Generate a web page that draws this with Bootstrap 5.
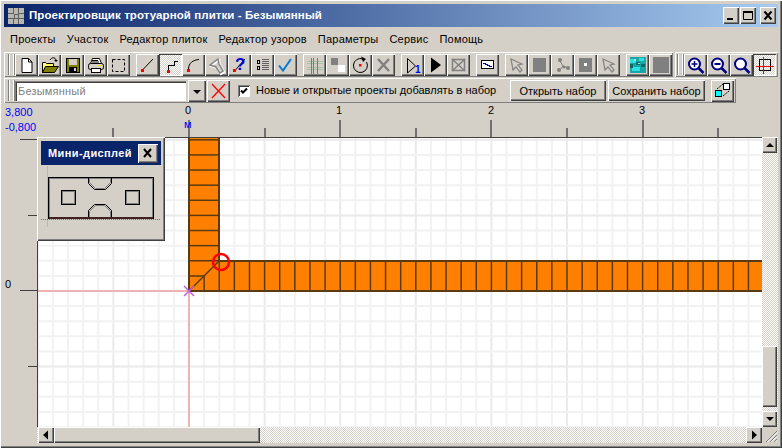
<!DOCTYPE html>
<html lang="ru">
<head>
  <meta charset="UTF-8">
  <title>Проектировщик тротуарной плитки</title>
  <link rel="stylesheet" href="https://cdn.jsdelivr.net/npm/bootstrap@5.3.0/dist/css/bootstrap.min.css">
  <style>
    html, body { width: 782px; height: 448px; overflow: hidden; }
    body { background: #d4d0c8; font: 11px/13px "Liberation Sans", Arial, sans-serif; color: #000; }
    .appWin { position: relative; width: 782px; height: 448px; padding: 4px 4px 4px; background: #d4d0c8;
      box-shadow: inset 1px 1px #fff, inset -1px -1px #404040, inset -2px -2px #808080; }
    .titleBar { height: 23px; padding-left: 4px; background: linear-gradient(90deg, #0a246a, #a6caf0); color: #fff; font-weight: 700; font-size: 11.5px; }
    .titleText { margin-left: 5px; letter-spacing: .08px; }
    .capBtn { width: 16px; height: 17px; margin-left: 1px; padding: 0; border: 0; background: #d4d0c8;
      box-shadow: inset 1px 1px #fff, inset -1px -1px #404040, inset -2px -2px #808080; }
    .capBtn svg { display: block; }
    .capGap { margin-left: 2px; margin-right: 2px; }
    .menuRow { height: 25px; padding-left: 6px; }
    .menuRow span { margin-right: 11px; font-size: 11px; letter-spacing: .22px; }
    .toolRow { height: 26px; }
    .toolBand { height: 25px; padding: 2px 0 0 4px; box-shadow: inset 1px 1px #fff, inset -1px -1px #808080; }
    .grip { width: 7px; height: 21px; border-left: 1px solid #808080; border-right: 1px solid #808080; box-shadow: inset 1px 0 #fff, inset -1px 0 #fff; background: linear-gradient(#d4d0c8, #d4d0c8) 2px 0/1px 100% no-repeat; flex: none; }
    .wbtn.btn { --bs-btn-border-width: 0; --bs-btn-padding-x: 0; --bs-btn-padding-y: 0; --bs-btn-border-radius: 0;
      display: block; flex: none; width: 23px; height: 22px; color: #000; background: #d4d0c8; font: 11px "Liberation Sans", Arial, sans-serif;
      box-shadow: inset 1px 1px #fff, inset -1px -1px #404040, inset -2px -2px #808080; }
    .wbtn.pressedBtn { background: repeating-conic-gradient(#fff 0 25%, #d4d0c8 0 50%) 0 0/2px 2px;
      box-shadow: inset 1px 1px #404040, inset -1px -1px #fff; }
    .wbtn svg { display: block; margin-top: -1px; }
    .gapL { margin-left: 6px; }
    .nameInput.form-control { width: 171px; height: 20px; padding: 0 3px; flex: none; border: 0; border-radius: 0; background: #fff; color: #808080; font-size: 11px; letter-spacing: .2px;
      box-shadow: inset 1px 1px #808080, inset 2px 2px #404040, inset -1px -1px #fff; }
    .keepChk.form-check-input { width: 12px; height: 12px; margin: 0 6px 0 8px; flex: none; border: 0; border-radius: 0; background-color: #fff;
      background-image: url("data:image/svg+xml,%3Csvg xmlns='http://www.w3.org/2000/svg' viewBox='0 0 12 12'%3E%3Cpath d='M3 5.5l2 2 4-4' fill='none' stroke='%23000' stroke-width='2'/%3E%3C/svg%3E"); background-size: 12px 12px;
      box-shadow: inset 1px 1px #808080, inset -1px -1px #fff, inset 2px 2px #404040; }
    .optText { letter-spacing: .02px; }
    .textBtn.btn { width: 96px; height: 21px; }
    .workArea { display: grid; grid-template-columns: 33px 725px 16px; grid-template-rows: 33px 290px 16px; }
    .topRuler { grid-column: 1 / 4; position: relative; }
    .topRuler svg, .sideRuler svg { display: block; }
    .sideRuler { grid-row: 2 / 4; }
    svg text { font-family: "Liberation Sans", Arial, sans-serif; font-size: 11px; }
    .canvasBox { box-shadow: inset 1px 1px #404040; background: #fff; overflow: hidden; padding: 1px 0 0 1px; }
    .dither { background: repeating-conic-gradient(#fff 0 25%, #d4d0c8 0 50%) 0 0/2px 2px; }
    .barBtn { width: 15px; height: 16px; flex: none; background: #d4d0c8; box-shadow: inset 1px 1px #fff, inset -1px -1px #404040, inset -2px -2px #808080; }
    .barBtn svg { display: block; }
    .thumbV { width: 15px; height: 61px; margin-top: auto; margin-bottom: 4px; background: #d4d0c8; box-shadow: inset 1px 1px #fff, inset -1px -1px #404040, inset -2px -2px #808080; }
    .thumbH { width: 206px; height: 16px; background: #d4d0c8; box-shadow: inset 1px 1px #fff, inset -1px -1px #404040, inset -2px -2px #808080; }
    .hBar { padding-left: 1px; }
    .miniPanel { position: absolute; left: 37px; top: 137px; width: 128px; height: 104px; padding: 4px; background: #d4d0c8;
      box-shadow: inset 1px 1px #fff, inset -1px -1px #404040, inset -2px -2px #808080; }
    .miniHead { height: 24px; background: #0a246a; color: #fff; font-weight: 700; font-size: 11px; padding-left: 7px; letter-spacing: .4px; }
    .miniClose { width: 20px; height: 19px; margin-right: 3px; border: 0; padding: 0; background: #d4d0c8; box-shadow: inset 1px 1px #fff, inset -1px -1px #404040, inset -2px -2px #808080; }
    .miniClose svg { display: block; }
    .miniPic { display: block; }
  </style>
</head>
<body>
  <div class="appWin">
    <div class="titleBar d-flex align-items-center">
      <svg width="16" height="16" viewBox="0 0 16 16" shape-rendering="crispEdges">
        <rect width="16" height="16" fill="#b8b8b0"/>
        <path d="M0 5h6M0 10h6M10 5h6M10 10h6M5 0v5M10 0v5M5 11v5M10 11v5M6 6h4v4H6z" stroke="#606060" fill="none"/>
      </svg>
      <span class="titleText">Проектировщик тротуарной плитки - Безымянный</span>
      <div class="ms-auto d-flex capGap">
        <button class="capBtn"><svg width="16" height="17"><rect x="4" y="11" width="6" height="2"/></svg></button>
        <button class="capBtn"><svg width="16" height="17"><path d="M3.500 4.500h9v8h-9z" fill="none" stroke="#000"/><rect x="3" y="4" width="10" height="2"/></svg></button>
        <button class="capBtn ms-1"><svg width="16" height="17"><path d="M4.500 4.500l7 8M11.500 4.500l-7 8" stroke="#000" stroke-width="2"/></svg></button>
      </div>
    </div>

    <div class="menuRow d-flex align-items-center">
      <span>Проекты</span><span>Участок</span><span>Редактор плиток</span><span>Редактор узоров</span><span>Параметры</span><span>Сервис</span><span>Помощь</span>
    </div>

    <div class="toolRow d-flex">
      <div class="toolBand d-flex" style="width:669px">
        <div class="grip"></div>
        <button class="btn wbtn"><svg width="23" height="22"><path d="M7 4.500h6.500l3.500 3.500v10.500H7z" fill="#fff" stroke="#000"/><path d="M13.500 4.500v3.500h3.500" fill="none" stroke="#000"/></svg></button>
        <button class="btn wbtn"><svg width="23" height="22"><path d="M4.500 18.500v-10h3l1 1h7v9z" fill="#ffff66" stroke="#000"/><path d="M4.500 18.500l3-6h13l-4 6z" fill="#808000" stroke="#000"/><path d="M12 6c2-3 5-3 6 0" fill="none" stroke="#000"/><path d="M16 6h4l-2 2z"/></svg></button>
        <button class="btn wbtn"><svg width="23" height="22" shape-rendering="crispEdges"><rect x="5" y="4" width="14" height="15" fill="#000"/><rect x="6" y="5" width="12" height="13" fill="#808000"/><rect x="8" y="5" width="8" height="6" fill="#d4d0c8"/><rect x="8" y="13" width="8" height="5" fill="#000"/><rect x="13" y="14" width="2" height="3" fill="#d4d0c8"/></svg></button>
        <button class="btn wbtn"><svg width="23" height="22"><path d="M8.500 4.500h7l2 5h-11z" fill="#fff" stroke="#000"/><rect x="4.500" y="9.500" width="15" height="6" rx="2" fill="#d4d0c8" stroke="#000"/><rect x="7.500" y="14.500" width="9" height="4" fill="#fff" stroke="#000"/><path d="M8 6.500h6M8 8h7" stroke="#000"/><rect x="14" y="11" width="3" height="1" fill="#ffd800"/></svg></button>
        <button class="btn wbtn"><svg width="23" height="22"><rect x="5.500" y="5.500" width="12" height="12" fill="none" stroke="#000" stroke-dasharray="3 2"/></svg></button>

        <button class="btn wbtn gapL"><svg width="23" height="22"><path d="M7 15.500L17 5" stroke="#000"/><rect x="5" y="15" width="3" height="3" fill="#f00"/></svg></button>
        <button class="btn wbtn pressedBtn"><svg width="23" height="22" shape-rendering="crispEdges"><path d="M9.500 17v-5.500h6v-4h3" fill="none" stroke="#000"/><rect x="8" y="16" width="3" height="3" fill="#f00"/></svg></button>
        <button class="btn wbtn"><svg width="23" height="22"><path d="M6.500 15C6.500 9 11 6 17 5.500" fill="none" stroke="#000"/><rect x="5" y="15" width="3" height="3" fill="#f00"/></svg></button>
        <button class="btn wbtn"><svg width="23" height="22"><path d="M5 11l8-6 1 5 4 7-3 2-4-6z" fill="none" stroke="#fff" stroke-width="2" transform="translate(1 1)"/><path d="M5 11l8-6 1 5 4 7-3 2-4-6z" fill="none" stroke="#808080" stroke-width="1.500"/></svg></button>
        <button class="btn wbtn"><svg width="23" height="22"><path d="M7 16.500L17 5" stroke="#000"/><rect x="5" y="15" width="3" height="3" fill="#f00"/><text x="7" y="16" fill="#0000d0" style="font-size:17px;font-weight:700">?</text></svg></button>
        <button class="btn wbtn"><svg width="23" height="22" shape-rendering="crispEdges"><path d="M11 5.500h7M11 7.500h7M11 9.500h7M11 11.500h7M11 13.500h7M11 15.500h7" stroke="#606060"/><circle cx="7.500" cy="8" r="1.500" fill="none" stroke="#000"/><circle cx="7.500" cy="14" r="1.500" fill="none" stroke="#000"/></svg></button>
        <button class="btn wbtn"><svg width="23" height="22"><path d="M5 11.500l4 5L17 5" fill="none" stroke="#0a7ad0" stroke-width="2"/></svg></button>

        <button class="btn wbtn gapL"><svg width="23" height="22" shape-rendering="crispEdges"><path d="M4 7.500h16M4 9.500h16M4 13.500h16M4 15.500h16" stroke="#a8c0a8"/><path d="M8.500 4v16M10.500 4v16M14.500 4v16" stroke="#70806f"/></svg></button>
        <button class="btn wbtn"><svg width="23" height="22" shape-rendering="crispEdges"><rect x="5" y="4" width="14" height="14" fill="#808080"/><rect x="12" y="4" width="7" height="7" fill="#d4d0c8"/><rect x="5" y="11" width="7" height="7" fill="#d4d0c8"/><rect x="12" y="11" width="7" height="7" fill="#fff"/></svg></button>
        <button class="btn wbtn"><svg width="23" height="22"><path d="M17.500 8a7 7 0 1 1-3.500-3" fill="none" stroke="#000"/><path d="M12 2.500l5 2.500-3 3z"/><rect x="10" y="10" width="2.500" height="2.500" fill="#f00"/></svg></button>
        <button class="btn wbtn"><svg width="23" height="22"><path d="M6 5l11 12M17 5L6 17" stroke="#808080" stroke-width="2.500"/></svg></button>

        <button class="btn wbtn gapL"><svg width="23" height="22"><path d="M6.500 4.500l8 7.500-8 7z" fill="none" stroke="#000"/><text x="14" y="19" fill="#0000ff" style="font-size:10px;font-weight:700">1</text></svg></button>
        <button class="btn wbtn"><svg width="23" height="22"><path d="M7 3.500l10 7.500-10 7.500z"/></svg></button>
        <button class="btn wbtn"><svg width="23" height="22"><rect x="5.500" y="5.500" width="12" height="11" fill="none" stroke="#808080" stroke-width="1.500"/><path d="M5 5l13 12M18 5L5 17" stroke="#808080" stroke-width="1.500"/></svg></button>

        <button class="btn wbtn gapL"><svg width="23" height="22" shape-rendering="crispEdges"><rect x="5.500" y="6.500" width="12" height="8" fill="#fff" stroke="#000" stroke-width="1"/><path d="M7 9h2v1h2v1h2v1h3" fill="none" stroke="#0000c0"/></svg></button>

        <button class="btn wbtn gapL"><svg width="23" height="22"><path d="M6 5l11 5-4 1 4 5-2 2-4-5-3 3z" fill="none" stroke="#808080" stroke-width="1.200"/></svg></button>
        <button class="btn wbtn"><svg width="23" height="22"><rect x="5" y="4" width="13" height="14" fill="#808080"/></svg></button>
        <button class="btn wbtn"><svg width="23" height="22"><path d="M9 7l3 5M12 12l5 2M12 12l-4 5" stroke="#808080"/><circle cx="9" cy="6" r="2" fill="#808080"/><circle cx="8" cy="16" r="2" fill="#808080"/><circle cx="17" cy="14" r="2" fill="#808080"/><circle cx="13" cy="13" r="1.500" fill="#808080"/></svg></button>
        <button class="btn wbtn"><svg width="23" height="22" shape-rendering="crispEdges"><rect x="5" y="4" width="13" height="14" fill="#808080"/><rect x="10" y="9" width="3" height="3" fill="#fff"/></svg></button>
        <button class="btn wbtn"><svg width="23" height="22"><path d="M6 5l11 5-4 1 4 5-2 2-4-5-3 3z" fill="none" stroke="#808080" stroke-width="1.200"/></svg></button>

        <button class="btn wbtn gapL"><svg width="23" height="22" shape-rendering="crispEdges"><rect x="4" y="3" width="16" height="16" fill="#1aa6a6"/><path d="M4 5h6v4H4zM13 4h5v3h-5zM6 13h8v4H6z" fill="#2ae0e0"/><path d="M10 8h4v3h-4zM15 10h4v3h-4zM4 10h3v4H4z" fill="#0c6a6a"/><path d="M8 5h2v2H8zM12 9h2v1h-2z" fill="#9af0d8"/></svg></button>
        <button class="btn wbtn"><svg width="23" height="22" shape-rendering="crispEdges"><rect x="4" y="3" width="16" height="16" fill="#808080"/><path d="M4 19h16M20 3v16" stroke="#d4d0c8"/></svg></button>
      </div>
      <div class="toolBand d-flex" style="width:103px;margin-left:2px;padding-left:2px">
        <div class="grip"></div>
        <button class="btn wbtn"><svg width="23" height="22"><circle cx="10.500" cy="10" r="5.500" fill="#fff" stroke="#000080" stroke-width="2"/><path d="M14.500 14l5 5" stroke="#000080" stroke-width="2.500"/><path d="M7.500 10h6M10.500 7v6" stroke="#000080" stroke-width="1.500"/></svg></button>
        <button class="btn wbtn"><svg width="23" height="22"><circle cx="10.500" cy="10" r="5.500" fill="#fff" stroke="#000080" stroke-width="2"/><path d="M14.500 14l5 5" stroke="#000080" stroke-width="2.500"/><path d="M7.500 10h6" stroke="#000080" stroke-width="2"/></svg></button>
        <button class="btn wbtn"><svg width="23" height="22"><circle cx="10.500" cy="10" r="5.500" fill="#fff" stroke="#000080" stroke-width="2"/><path d="M14.500 14l5 5" stroke="#000080" stroke-width="2.500"/></svg></button>
        <button class="btn wbtn pressedBtn"><svg width="23" height="22" shape-rendering="crispEdges"><rect x="6.500" y="5.500" width="11" height="11" fill="none" stroke="#000"/><path d="M3 12h18M10.500 3v17" stroke="#f00"/></svg></button>
      </div>
    </div>

    <div class="toolRow d-flex">
      <div class="toolBand d-flex align-items-center" style="width:732px;padding-top:0">
        <div class="grip"></div>
        <input class="form-control nameInput" type="text" value="Безымянный">
        <button class="btn wbtn" style="width:18px;margin-left:2px"><svg width="18" height="22"><path d="M5 11h8l-4 4z"/></svg></button>
        <button class="btn wbtn" style="margin-left:1px"><svg width="23" height="22"><path d="M5 5l13 14M18 5L5 19" stroke="#f00" stroke-width="1.300"/></svg></button>
        <input class="form-check-input keepChk" type="checkbox" checked>
        <span class="optText flex-grow-1">Новые и открытые проекты добавлять в набор</span>
        <button class="btn wbtn textBtn">Открыть набор</button>
        <button class="btn wbtn textBtn" style="width:97px;margin-left:2px">Сохранить набор</button>
        <button class="btn wbtn" style="margin:0 2px 0 6px"><svg width="23" height="22"><rect x="4.500" y="11.500" width="6" height="6" fill="#00ffff" stroke="#000"/><rect x="12.500" y="4.500" width="6" height="6" fill="#fff" stroke="#000"/><path d="M6 10l6-5M12 17l6-5" stroke="#000" stroke-dasharray="2 1"/></svg></button>
      </div>
    </div>

    <div class="workArea">
      <div class="topRuler">
        <svg id="topRulerSvg" width="774" height="33">
          <text x="1" y="12" fill="#0000ff">3,800</text>
          <text x="1" y="27" fill="#0000ff">-0,800</text>
          <text x="181" y="10">0</text>
          <text x="332" y="10">1</text>
          <text x="484" y="10">2</text>
          <text x="635" y="10">3</text>
        </svg>
      </div>
      <div class="sideRuler">
        <svg width="33" height="306" shape-rendering="crispEdges">
          <path d="M16 2.500h17M24 78.500h9M16 153.500h17M24 229.500h9" stroke="#404040"/>
          <text x="1" y="151">0</text>
        </svg>
      </div>
      <div class="canvasBox">
        <svg id="planSvg" width="724" height="289"></svg>
      </div>
      <div class="d-flex flex-column dither">
        <div class="barBtn"><svg width="15" height="16"><path d="M4 10h8l-4-4z"/></svg></div>
        <div class="thumbV"></div>
        <div class="barBtn"><svg width="15" height="16"><path d="M4 6h8l-4 4z"/></svg></div>
      </div>
      <div class="d-flex dither hBar">
        <div class="barBtn" style="width:16px"><svg width="16" height="16"><path d="M10 3.500v9l-5-4.500z"/></svg></div>
        <div class="thumbH"></div>
        <div class="barBtn ms-auto" style="width:16px"><svg width="16" height="16"><path d="M6 3.500v9l5-4.500z"/></svg></div>
      </div>
      <div>
        <svg width="16" height="16"><path d="M15 4L4 15M15 8l-7 7M15 12l-3 3" stroke="#808080"/><path d="M15 5.500L5.500 15M15 9.500L9.500 15M15 13.500L13.500 15" stroke="#fff"/></svg>
      </div>
    </div>

    <div class="miniPanel">
      <div class="miniHead d-flex align-items-center justify-content-between">
        <span>Мини-дисплей</span>
        <button class="miniClose"><svg width="20" height="19"><path d="M6 5l7 8M13 5l-7 8" stroke="#000" stroke-width="2"/></svg></button>
      </div>
      <svg class="miniPic" width="119" height="70" viewBox="41 165 119 70">
        <path d="M47.500 166v61" stroke="#e8a0a0"/>
        <path d="M41 219.500h119" stroke="#e04040" stroke-dasharray="1 1"/>
        <g fill="none" stroke="#808080" stroke-width="1">
          <rect x="49.500" y="178.500" width="103" height="39"/>
          <path d="M89.500 178.500v4l6 6h9l6-6v-4"/>
          <path d="M89.500 217.500v-6l6-6h9l6 6v6"/>
          <rect x="62.500" y="191.500" width="12" height="12"/>
          <rect x="126.500" y="191.500" width="12" height="12"/>
        </g>
        <g fill="none" stroke="#000" stroke-width="1">
          <rect x="48.500" y="177.500" width="105" height="41"/>
          <path d="M88.500 177.500v6l6 6h11l6-6v-6"/>
          <path d="M88.500 218.500v-8l6-6h11l6 6v8"/>
          <rect x="61.500" y="190.500" width="14" height="14"/>
          <rect x="125.500" y="190.500" width="14" height="14"/>
        </g>
        <path d="M49 218h104" stroke="#402020" stroke-width="2"/>
      </svg>
    </div>
  </div>

  <script>
    // ruler ticks on top: every 0.5 unit, the whole ones are longer
    const step = 15.12;
    const originX = 151, originY = 153;
    const ns = "http://www.w3.org/2000/svg";

    function addEl(svg, tag, attrs) {
      const el = document.createElementNS(ns, tag);
      Object.keys(attrs).forEach((k) => el.setAttribute(k, attrs[k]));
      svg.appendChild(el);
      return el;
    }

    const ruler = document.getElementById("topRulerSvg");
    for (let i = -1; i <= 7; i++) {
      const x = Math.round(185 + i * step * 5);
      addEl(ruler, "path", { d: `M${x} ${i % 2 === 0 ? 16 : 24}V33`, stroke: "#505050", "stroke-width": 1.5 });
    }
    const unitMark = addEl(ruler, "text", { x: 180, y: 24, fill: "#0000ff" });
    unitMark.textContent = "м";

    const plan = document.getElementById("planSvg");
    // grid
    for (let i = -10; i <= 38; i++) {
      const x = originX + i * step;
      addEl(plan, "path", { d: `M${x} 0V289`, stroke: i % 5 === 0 ? "#eaeaea" : "#f2f2f2", "stroke-width": 2 });
    }
    for (let i = -10; i <= 10; i++) {
      const y = originY + i * step;
      addEl(plan, "path", { d: `M0 ${y}H724`, stroke: i % 5 === 0 ? "#eaeaea" : "#f2f2f2", "stroke-width": 2 });
    }
    // axes
    addEl(plan, "path", { d: `M0 ${originY}H${originX}M${originX} ${originY}V289`, stroke: "#eeb4b4", "stroke-width": 2 });

    // tiles
    const tileLine = "#5a3a10";
    addEl(plan, "path", { d: `M${originX} 0H${originX + 30}V${originY - 30}H724V${originY}H${originX}Z`, fill: "#ff8000" });
    for (let i = 2; i <= 10; i++) {
      const y = originY - i * step;
      addEl(plan, "path", { d: `M${originX} ${y}H${originX + 30}`, stroke: tileLine, "stroke-width": 1.5 });
    }
    addEl(plan, "path", { d: `M${originX} ${originY - step}H${originX + step}V${originY}`, fill: "none", stroke: tileLine, "stroke-width": 1.5 });
    for (let i = 2; i <= 38; i++) {
      const x = originX + i * step;
      addEl(plan, "path", { d: `M${x} ${originY - 30}V${originY}`, stroke: tileLine, "stroke-width": 1.5 });
    }
    addEl(plan, "path", { d: `M${originX} 0V${originY}H724M${originX + 30} 0V${originY - 30}H724`, fill: "none", stroke: tileLine, "stroke-width": 2 });
    addEl(plan, "path", { d: `M${originX} ${originY}L${originX + 30} ${originY - 30}`, stroke: tileLine, "stroke-width": 1.5 });
    // marks
    addEl(plan, "path", { d: `M${originX - 5} ${originY - 5}l10 10M${originX + 5} ${originY - 5}l-10 10`, stroke: "#c060e8", "stroke-width": 1.5 });
    addEl(plan, "circle", { cx: originX + 32, cy: originY - 29, r: 8, fill: "none", stroke: "#f00", "stroke-width": 2.5 });
  </script>
  <script src="https://cdn.jsdelivr.net/npm/bootstrap@5.3.0/dist/js/bootstrap.bundle.min.js"></script>
</body>
</html>
